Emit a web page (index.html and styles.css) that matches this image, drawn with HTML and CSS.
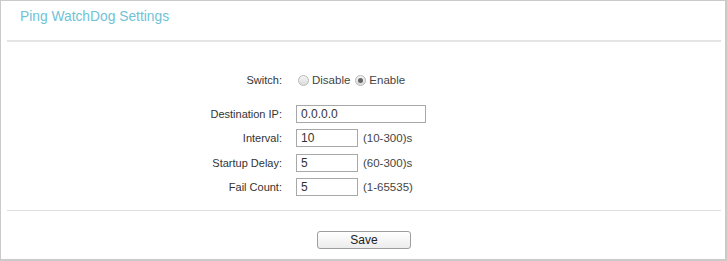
FILE: index.html
```html
<!DOCTYPE html>
<html lang="en">
<head>
    <meta charset="UTF-8">
    <title>Ping WatchDog Settings</title>
    <link rel="stylesheet" href="styles.css">
</head>
<body>
    <div class="panel">
        <div class="panel-head">
            <h2 class="panel-title">Ping WatchDog Settings</h2>
        </div>
        <div class="divider divider-thick"></div>

        <div class="form">
            <div class="form-row row-switch">
                <label class="form-label">Switch:</label>
                <div class="form-field">
                    <span class="radio"></span><span class="radio-text">Disable</span>
                    <span class="radio checked"></span><span class="radio-text">Enable</span>
                </div>
            </div>
            <div class="form-row">
                <label class="form-label">Destination IP:</label>
                <div class="form-field"><input class="text-box text-box-lg" type="text" value="0.0.0.0"></div>
            </div>
            <div class="form-row">
                <label class="form-label">Interval:</label>
                <div class="form-field"><input class="text-box" type="text" value="10"><span class="hint">(10-300)s</span></div>
            </div>
            <div class="form-row">
                <label class="form-label">Startup Delay:</label>
                <div class="form-field"><input class="text-box" type="text" value="5"><span class="hint">(60-300)s</span></div>
            </div>
            <div class="form-row">
                <label class="form-label">Fail Count:</label>
                <div class="form-field"><input class="text-box" type="text" value="5"><span class="hint">(1-65535)</span></div>
            </div>
        </div>

        <div class="divider"></div>

        <div class="actions">
            <button class="btn" type="button">Save</button>
        </div>
    </div>
</body>
</html>
```

FILE: styles.css
```css
body {
    margin: 0;
    padding: 0;
    background: #fff;
    font-family: 'Liberation Sans', Arial, sans-serif;
    color: #333;
}

.panel {
    width: 727px;
    height: 261px;
    box-sizing: border-box;
    border: 1px solid #cacaca;
    border-right-width: 2px;
    border-bottom-width: 2px;
}

.panel-head {
    height: 39px;
    padding: 8px 0 0 19px;
    box-sizing: border-box;
}

.panel-title {
    margin: 0;
    font-size: 13.8px;
    font-weight: normal;
    line-height: 16px;
    color: #6fc3d6;
}

.divider {
    height: 1px;
    margin: 0 4px 0 6px;
    background: #dedede;
}

.divider-thick {
    height: 2px;
    background: #e4e4e4;
}

.form {
    padding: 29px 0 14px;
    display: flex;
    flex-direction: column;
    gap: 6px;
}

.form-row {
    display: flex;
    align-items: center;
    height: 18px;
    font-size: 11px;
}

.row-switch {
    margin-bottom: 10px;
}

.form-row:nth-child(4) {
    margin-top: 1px;
}

.form-label {
    width: 281px;
    text-align: right;
    color: #333;
}

.form-field {
    display: flex;
    align-items: center;
    margin-left: 14px;
}

.radio {
    width: 9px;
    height: 9px;
    border: 1px solid #b9b9b9;
    border-radius: 50%;
    background: linear-gradient(#f4f4f4, #dcdcdc);
    margin: 0 3px 0 2px;
    position: relative;
}

.radio.checked::after {
    content: "";
    position: absolute;
    left: 2px;
    top: 2px;
    width: 5px;
    height: 5px;
    border-radius: 50%;
    background: #666;
}

.radio-text {
    margin-right: 3px;
    font-size: 11.5px;
    color: #444;
}

.text-box {
    width: 62px;
    height: 18px;
    box-sizing: border-box;
    margin: 0;
    padding: 0 4px;
    border: 1px solid #a8a8a8;
    font-family: 'Liberation Sans', Arial, sans-serif;
    font-size: 12px;
    color: #333;
}

.text-box-lg {
    width: 130px;
}

.hint {
    margin-left: 5px;
    font-size: 11.5px;
    color: #444;
}

.actions {
    display: flex;
    padding: 20px 0 0 316px;
}

.btn {
    width: 94px;
    height: 18px;
    padding: 0;
    border: 1px solid #9d9d9d;
    border-radius: 3px;
    background: linear-gradient(#ffffff, #ececec);
    font-family: 'Liberation Sans', Arial, sans-serif;
    font-size: 12px;
    color: #222;
}
```
